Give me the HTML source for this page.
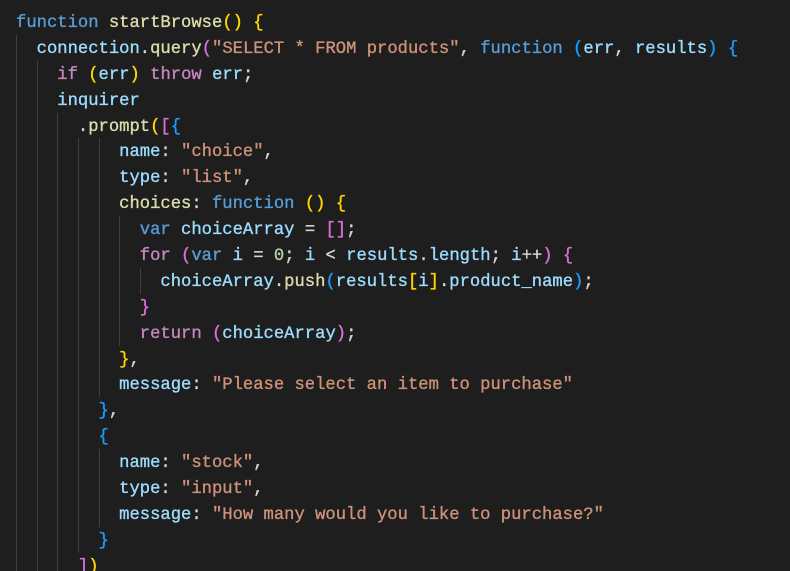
<!DOCTYPE html>
<html><head><meta charset="utf-8"><style>
html,body{margin:0;padding:0;background:#1e1e1e;width:790px;height:571px;overflow:hidden}
pre{margin:0;padding:11px 0 0 16px;font-family:"Liberation Mono",monospace;font-size:17.2px;line-height:25.9px;color:#d4d4d4;white-space:pre;-webkit-text-stroke:0.35px}
.l{display:block;height:25.9px}
.g{display:inline-block;width:20.64px;height:25.9px;vertical-align:top;box-shadow:inset 1px 0 #404040;margin-top:-2px}
.k{color:#569cd6}.c{color:#c586c0}.f{color:#dcdcaa}.v{color:#9cdcfe}.s{color:#ce9178}.n{color:#b5cea8}
.b1{color:#ffd700}.b2{color:#da70d6}.b3{color:#179fff}
</style></head><body><pre><span class="l"><span class="k">function</span> <span class="f">startBrowse</span><span class="b1">()</span> <span class="b1">{</span></span><span class="l"><span class="g">  </span><span class="v">connection</span>.<span class="f">query</span><span class="b2">(</span><span class="s">"SELECT * FROM products"</span>, <span class="k">function</span> <span class="b3">(</span><span class="v">err</span>, <span class="v">results</span><span class="b3">)</span> <span class="b3">{</span></span><span class="l"><span class="g">  </span><span class="g">  </span><span class="c">if</span> <span class="b1">(</span><span class="v">err</span><span class="b1">)</span> <span class="c">throw</span> <span class="v">err</span>;</span><span class="l"><span class="g">  </span><span class="g">  </span><span class="v">inquirer</span></span><span class="l"><span class="g">  </span><span class="g">  </span><span class="g">  </span>.<span class="f">prompt</span><span class="b1">(</span><span class="b2">[</span><span class="b3">{</span></span><span class="l"><span class="g">  </span><span class="g">  </span><span class="g">  </span><span class="g">  </span><span class="g">  </span><span class="v">name</span>: <span class="s">"choice"</span>,</span><span class="l"><span class="g">  </span><span class="g">  </span><span class="g">  </span><span class="g">  </span><span class="g">  </span><span class="v">type</span>: <span class="s">"list"</span>,</span><span class="l"><span class="g">  </span><span class="g">  </span><span class="g">  </span><span class="g">  </span><span class="g">  </span><span class="f">choices</span>: <span class="k">function</span> <span class="b1">()</span> <span class="b1">{</span></span><span class="l"><span class="g">  </span><span class="g">  </span><span class="g">  </span><span class="g">  </span><span class="g">  </span><span class="g">  </span><span class="k">var</span> <span class="v">choiceArray</span> = <span class="b2">[]</span>;</span><span class="l"><span class="g">  </span><span class="g">  </span><span class="g">  </span><span class="g">  </span><span class="g">  </span><span class="g">  </span><span class="c">for</span> <span class="b2">(</span><span class="k">var</span> <span class="v">i</span> = <span class="n">0</span>; <span class="v">i</span> &lt; <span class="v">results</span>.<span class="v">length</span>; <span class="v">i</span>++<span class="b2">)</span> <span class="b2">{</span></span><span class="l"><span class="g">  </span><span class="g">  </span><span class="g">  </span><span class="g">  </span><span class="g">  </span><span class="g">  </span><span class="g">  </span><span class="v">choiceArray</span>.<span class="f">push</span><span class="b3">(</span><span class="v">results</span><span class="b1">[</span><span class="v">i</span><span class="b1">]</span>.<span class="v">product_name</span><span class="b3">)</span>;</span><span class="l"><span class="g">  </span><span class="g">  </span><span class="g">  </span><span class="g">  </span><span class="g">  </span><span class="g">  </span><span class="b2">}</span></span><span class="l"><span class="g">  </span><span class="g">  </span><span class="g">  </span><span class="g">  </span><span class="g">  </span><span class="g">  </span><span class="c">return</span> <span class="b2">(</span><span class="v">choiceArray</span><span class="b2">)</span>;</span><span class="l"><span class="g">  </span><span class="g">  </span><span class="g">  </span><span class="g">  </span><span class="g">  </span><span class="b1">}</span>,</span><span class="l"><span class="g">  </span><span class="g">  </span><span class="g">  </span><span class="g">  </span><span class="g">  </span><span class="v">message</span>: <span class="s">"Please select an item to purchase"</span></span><span class="l"><span class="g">  </span><span class="g">  </span><span class="g">  </span><span class="g">  </span><span class="b3">}</span>,</span><span class="l"><span class="g">  </span><span class="g">  </span><span class="g">  </span><span class="g">  </span><span class="b3">{</span></span><span class="l"><span class="g">  </span><span class="g">  </span><span class="g">  </span><span class="g">  </span><span class="g">  </span><span class="v">name</span>: <span class="s">"stock"</span>,</span><span class="l"><span class="g">  </span><span class="g">  </span><span class="g">  </span><span class="g">  </span><span class="g">  </span><span class="v">type</span>: <span class="s">"input"</span>,</span><span class="l"><span class="g">  </span><span class="g">  </span><span class="g">  </span><span class="g">  </span><span class="g">  </span><span class="v">message</span>: <span class="s">"How many would you like to purchase?"</span></span><span class="l"><span class="g">  </span><span class="g">  </span><span class="g">  </span><span class="g">  </span><span class="b3">}</span></span><span class="l"><span class="g">  </span><span class="g">  </span><span class="g">  </span><span class="b2">]</span><span class="b1">)</span></span></pre></body></html>
